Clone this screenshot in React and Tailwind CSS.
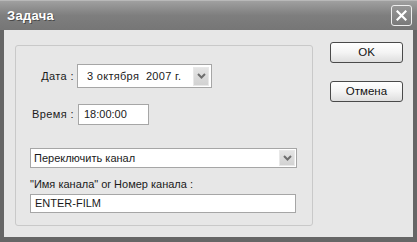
import React from 'react';

const Chevron = () => (
  <svg width="9" height="6" viewBox="0 0 9 6">
    <path d="M1 1 L4.5 4.5 L8 1" fill="none" stroke="#6e6e6e" strokeWidth="2" />
  </svg>
);

const DropButton = ({ className }) => (
  <div className={`flex items-center justify-center bg-gradient-to-b from-[#e4e4e4] to-[#d2d2d2] border border-[#e8e8e8] ${className}`}>
    <Chevron />
  </div>
);

const XpButton = ({ children }) => (
  <button className="w-[73px] h-[21px] rounded-[3px] border border-[#4a4a4a] bg-gradient-to-b from-[#ffffff] via-[#f4f4f4] to-[#dedede] text-[11.5px] text-[#111] leading-none">
    {children}
  </button>
);

export default function App() {
  return (
    <div
      className="w-[417px] h-[242px] flex flex-col bg-[#666666] text-[11px] text-[#1a1a1a] whitespace-nowrap"
      style={{ fontFamily: '"Liberation Sans", Arial, sans-serif' }}
    >
      {/* title bar */}
      <div className="h-[30px] flex items-center justify-between pl-[7px] pr-[5px] bg-gradient-to-b from-[#a0a0a0] via-[#7e7e7e] to-[#767676] border-t border-[#b8b8b8]">
        <span className="text-white font-bold text-[13px] tracking-[0.3px] [text-shadow:1px_1px_0_#4a4a4a]">Задача</span>
        <div className="w-[21px] h-[21px] rounded-[3px] border border-[#eeeeee] bg-gradient-to-b from-[#969696] to-[#7a7a7a] flex items-center justify-center">
          <svg width="11" height="11" viewBox="0 0 11 11">
            <path d="M1.5 1.5 L9.5 9.5 M9.5 1.5 L1.5 9.5" stroke="#ffffff" strokeWidth="2.2" strokeLinecap="square" />
          </svg>
        </div>
      </div>

      {/* body */}
      <div className="flex-1 ml-[4px] mr-[4px] mb-[5px] bg-[#e7e7e7] flex pl-[11px] pt-[15px]">
        {/* group */}
        <div className="w-[298px] h-[181px] border border-[#c9c9c9] rounded-[3px] pl-[14px] pt-[18px] flex flex-col">
          <div className="flex items-center h-[24px]">
            <span className="w-[44px] text-right tracking-[0.4px]">Дата :</span>
            <div className="ml-[3px] w-[135px] h-[24px] bg-white border border-[#a6a6a6] flex items-center justify-between pl-[9px] pr-[2px]">
              <span className="tracking-[0.3px]">3 октября&nbsp; 2007 г.</span>
              <DropButton className="w-[16px] h-[19px]" />
            </div>
          </div>
          <div className="flex items-center h-[21px] mt-[16px]">
            <span className="w-[44px] text-right tracking-[0.4px]">Время :</span>
            <div className="ml-[4px] w-[71px] h-[21px] bg-white border border-[#a6a6a6] flex items-center pl-[5px]">
              18:00:00
            </div>
          </div>
          <div className="mt-[23px] w-[267px] h-[20px] bg-white border border-[#a6a6a6] flex items-center justify-between pl-[3px] pr-[1px]">
            <span>Переключить канал</span>
            <DropButton className="w-[16px] h-[16px]" />
          </div>
          <div className="mt-[9px] leading-[14px]">"Имя канала" or Номер канала :</div>
          <div className="mt-[3px] w-[266px] h-[19px] bg-white border border-[#a6a6a6] flex items-center pl-[4px]">
            ENTER-FILM
          </div>
        </div>

        {/* buttons */}
        <div className="ml-[17px] -mt-[3px] flex flex-col gap-[18px]">
          <XpButton>OK</XpButton>
          <XpButton>Отмена</XpButton>
        </div>
      </div>
    </div>
  );
}
